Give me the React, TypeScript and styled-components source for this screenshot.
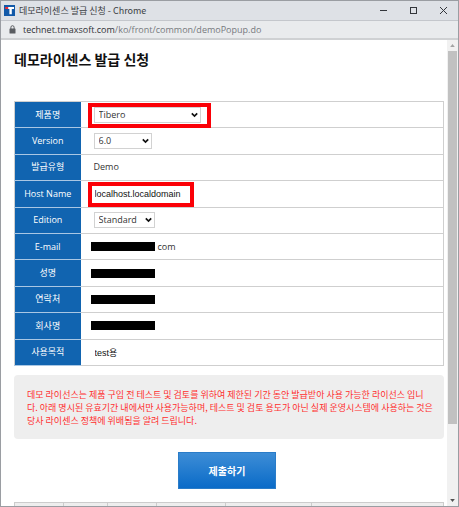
import React from "react";
import styled, { createGlobalStyle } from "styled-components";

const GlobalStyle = createGlobalStyle`
  *, *::before, *::after { box-sizing: border-box; }
  body {
    margin: 0;
    background: #fff;
    font-family: "Open Sans", "Noto Sans CJK KR", sans-serif;
    color: #333;
  }
`;

const Window = styled.div`
  display: flex;
  flex-direction: column;
  height: 100vh;
  overflow: hidden;
  border: 1px solid #9a9da2;
`;

const TitleBar = styled.header`
  flex: none;
  display: flex;
  align-items: center;
  height: 20px;
  padding-left: 3px;
  background: #dee1e6;
  border-bottom: 1px solid #c4c7cc;
`;

const WindowTitle = styled.div`
  flex: 1;
  margin-left: 4px;
  font-family: "Noto Sans CJK KR", sans-serif;
  font-size: 9px;
  line-height: 16px;
  color: #3c4043;
  white-space: nowrap;
`;

const WindowButton = styled.button`
  display: flex;
  align-items: center;
  justify-content: center;
  width: 30px;
  height: 18px;
  padding: 0;
  border: 0;
  background: none;
  color: #33363b;
`;

const AddressBar = styled.div`
  flex: none;
  display: flex;
  align-items: center;
  height: 19px;
  padding-left: 8px;
  background: #e9ebed;
  border-bottom: 2px solid #cfd1d3;
  font-size: 9px;
  line-height: 16px;
  white-space: nowrap;
  color: #777a7e;
`;

const Url = styled.span`
  margin-left: 7px;
`;

const Domain = styled.span`
  color: #303236;
`;

const Viewport = styled.div`
  flex: 1;
  display: flex;
  min-height: 0;
`;

const Page = styled.main`
  flex: 1;
  min-width: 0;
  overflow: hidden;
  padding: 9px 3px 0 13px;
`;

const Heading = styled.h1`
  margin: 0 0 31px;
  font-family: "Noto Sans CJK KR", sans-serif;
  font-size: 14px;
  line-height: 21px;
  font-weight: 700;
  color: #111;
`;

const FormTable = styled.table`
  width: 100%;
  height: 265px;
  border-collapse: collapse;
  border: 1px solid #cfcfcf;
  font-size: 9px;
  line-height: 16px;
`;

const Label = styled.th`
  width: 66px;
  padding: 0;
  background: #1164b0;
  border-bottom: 1px solid #a9c7e4;
  color: #fff;
  font-weight: 400;
`;

const Value = styled.td`
  padding: 0 0 0 13px;
  border-bottom: 1px solid #cfcfcf;
`;

const Field = styled.div`
  position: relative;
  display: flex;
  align-items: center;
  height: 18px;
`;

const SelectBox = styled.div<{ $width: number }>`
  position: relative;
  width: ${(p) => p.$width}px;
  height: 16px;
`;

const Select = styled.select`
  appearance: none;
  display: block;
  width: 100%;
  height: 16px;
  padding: 0 4px;
  border: 1px solid #d2d2d2;
  border-radius: 0;
  background: #fff;
  color: #333;
  font: inherit;
  line-height: 14px;
`;

const Chevron = styled.svg`
  position: absolute;
  right: 3px;
  top: 5px;
  pointer-events: none;
`;

const TextInput = styled.input`
  width: 100%;
  height: 16px;
  padding: 0 1px;
  border: 0;
  outline: 0;
  background: transparent;
  color: #111;
  font: 9px "Liberation Sans", "Noto Sans CJK KR", sans-serif;
`;

const Highlight = styled.span<{ $width: number }>`
  position: absolute;
  left: -6px;
  top: -3px;
  width: ${(p) => p.$width}px;
  height: 25px;
  border: 4px solid #fb0007;
  pointer-events: none;
`;

const Redaction = styled.span`
  width: 64px;
  height: 9px;
  margin: 0 3px 0 -3px;
  background: #000;
`;

const Notice = styled.p`
  margin: 9px 0 13px;
  padding: 13px 0 12px 13px;
  border-radius: 4px;
  background: #eee;
  color: #ff2e2e;
  font-family: "Noto Sans CJK KR", sans-serif;
  font-size: 9px;
  line-height: 13px;
  white-space: nowrap;
`;

const Actions = styled.div`
  display: flex;
  justify-content: center;
  margin-bottom: 13px;
  padding-right: 4px;
`;

const Submit = styled.button`
  width: 98px;
  height: 37px;
  padding: 0;
  border: 1px solid #2a7cc8;
  background: linear-gradient(#3d8dd6, #0a6bc8);
  color: #fff;
  font: 700 10px "Noto Sans CJK KR", sans-serif;
`;

const ListTable = styled.table`
  width: 100%;
  table-layout: fixed;
  border-collapse: collapse;
`;

const ListHead = styled.th<{ $width?: number }>`
  width: ${(p) => (p.$width ? `${p.$width}px` : "auto")};
  height: 26px;
  border: 1px solid #ccc;
  background: #eee;
`;

const Scrollbar = styled.div`
  flex: none;
  display: flex;
  flex-direction: column;
  width: 11px;
  background: #f1f1f1;
`;

const ScrollArrow = styled.svg`
  flex: none;
  width: 11px;
  height: 11px;
`;

const Track = styled.div`
  flex: 1;
  padding: 0 1px;
`;

const Thumb = styled.div`
  height: 84%;
  background: #c1c1c1;
`;

type DropDownProps = { id: string; value: string; width: number };

function DropDown({ id, value, width }: DropDownProps) {
  return (
    <SelectBox $width={width}>
      <Select id={id} defaultValue={value}>
        <option>{value}</option>
      </Select>
      <Chevron width="7" height="6" viewBox="0 0 7 6">
        <path d="M0.8 1.3 3.5 4 6.2 1.3" fill="none" stroke="#111" strokeWidth="1.7" />
      </Chevron>
    </SelectBox>
  );
}

type RowProps = { label: string; id?: string; children: React.ReactNode };

function Row({ label, id, children }: RowProps) {
  return (
    <tr>
      <Label scope="row">{id ? <label htmlFor={id}>{label}</label> : label}</Label>
      <Value>
        <Field>{children}</Field>
      </Value>
    </tr>
  );
}

const listColumns = [49, 44, 49, 69, 86, undefined];

export default function App() {
  return (
    <>
      <GlobalStyle />
      <Window>
        <TitleBar>
          <svg width="11" height="11" viewBox="0 0 11 11">
            <rect width="11" height="11" fill="#1259a8" />
            <path d="M4 2H10V4H7.8V9.2H5.4V4H4Z" fill="#fff" />
            <path d="M1.2 2H4.2V4H1.2Z" fill="#ee2b35" />
          </svg>
          <WindowTitle>데모라이센스 발급 신청 - Chrome</WindowTitle>
          <WindowButton aria-label="Minimize">
            <svg width="9" height="9" viewBox="0 0 9 9">
              <path d="M1 4.5H8" stroke="currentColor" />
            </svg>
          </WindowButton>
          <WindowButton aria-label="Maximize">
            <svg width="9" height="9" viewBox="0 0 9 9">
              <rect x="1.5" y="1.5" width="6" height="6" fill="none" stroke="currentColor" />
            </svg>
          </WindowButton>
          <WindowButton aria-label="Close">
            <svg width="9" height="9" viewBox="0 0 9 9">
              <path d="M1 1 8 8M8 1 1 8" stroke="currentColor" />
            </svg>
          </WindowButton>
        </TitleBar>
        <AddressBar>
          <svg width="7" height="9" viewBox="0 0 7 9">
            <rect x="0.5" y="3.5" width="6" height="5" rx="0.6" fill="#5a5d61" />
            <path d="M1.9 4V2.3a1.6 1.6 0 0 1 3.2 0V4" fill="none" stroke="#5a5d61" />
          </svg>
          <Url>
            <Domain>technet.tmaxsoft.com</Domain>/ko/front/common/demoPopup.do
          </Url>
        </AddressBar>
        <Viewport>
          <Page>
            <Heading>데모라이센스 발급 신청</Heading>
            <FormTable>
              <tbody>
                <Row label="제품명" id="product">
                  <DropDown id="product" value="Tibero" width={107} />
                  <Highlight $width={123} />
                </Row>
                <Row label="Version" id="version">
                  <DropDown id="version" value="6.0" width={58} />
                </Row>
                <Row label="발급유형">Demo</Row>
                <Row label="Host Name" id="host">
                  <TextInput id="host" defaultValue="localhost.localdomain" />
                  <Highlight $width={106} />
                </Row>
                <Row label="Edition" id="edition">
                  <DropDown id="edition" value="Standard" width={61} />
                </Row>
                <Row label="E-mail">
                  <Redaction />
                  com
                </Row>
                <Row label="성명">
                  <Redaction />
                </Row>
                <Row label="연락처">
                  <Redaction />
                </Row>
                <Row label="회사명">
                  <Redaction />
                </Row>
                <Row label="사용목적" id="purpose">
                  <TextInput id="purpose" defaultValue="test용" />
                </Row>
              </tbody>
            </FormTable>
            <Notice>
              데모 라이선스는 제품 구입 전 테스트 및 검토를 위하여 제한된 기간 동안 발급받아 사용 가능한 라이선스 입니
              <br />
              다. 아래 명시된 유효기간 내에서만 사용가능하며, 테스트 및 검토 용도가 아닌 실제 운영시스템에 사용하는 것은
              <br />
              당사 라이센스 정책에 위배됨을 알려 드립니다.
            </Notice>
            <Actions>
              <Submit>제출하기</Submit>
            </Actions>
            <ListTable>
              <thead>
                <tr>
                  {listColumns.map((width, i) => (
                    <ListHead key={i} $width={width} />
                  ))}
                </tr>
              </thead>
            </ListTable>
          </Page>
          <Scrollbar>
            <ScrollArrow viewBox="0 0 11 11">
              <path d="M5.5 4 7.8 7H3.2Z" fill="#a3a3a3" />
            </ScrollArrow>
            <Track>
              <Thumb />
            </Track>
            <ScrollArrow viewBox="0 0 11 11">
              <path d="M5.5 7 7.8 4H3.2Z" fill="#505050" />
            </ScrollArrow>
          </Scrollbar>
        </Viewport>
      </Window>
    </>
  );
}
